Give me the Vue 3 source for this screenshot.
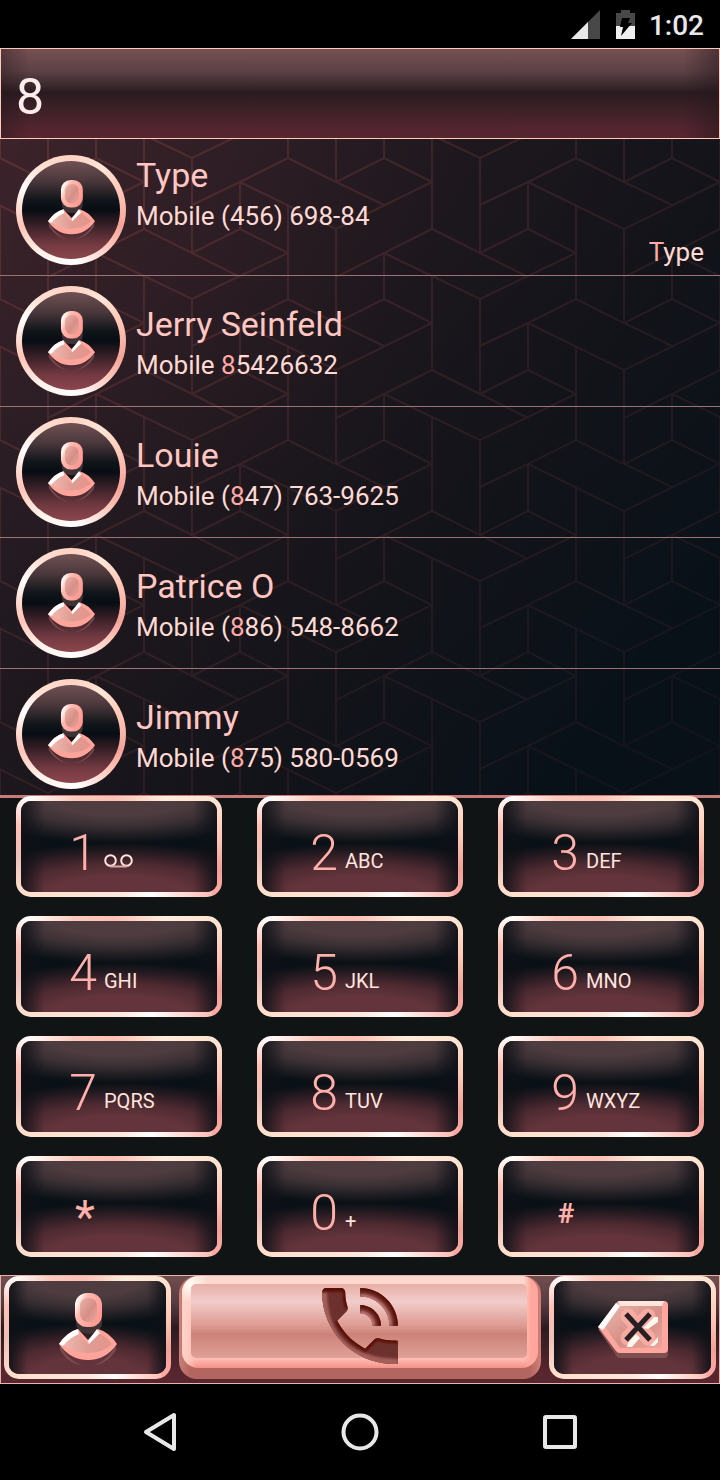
<script setup>
import { ref } from 'vue'

const query = ref('8')

const contacts = [
  { name: 'Type', label: 'Mobile', number: [['(456) 698-84', false]], extra: [['T', true], ['ype', false]] },
  { name: 'Jerry Seinfeld', label: 'Mobile', number: [['8', true], ['5426632', false]] },
  { name: 'Louie', label: 'Mobile', number: [['(', false], ['8', true], ['47) 763-9625', false]] },
  { name: 'Patrice O', label: 'Mobile', number: [['(', false], ['8', true], ['86) 548-8662', false]] },
  { name: 'Jimmy', label: 'Mobile', number: [['(', false], ['8', true], ['75) 580-0569', false]] },
]

const keys = [
  { digit: '1', letters: '', voicemail: true },
  { digit: '2', letters: 'ABC' },
  { digit: '3', letters: 'DEF' },
  { digit: '4', letters: 'GHI' },
  { digit: '5', letters: 'JKL' },
  { digit: '6', letters: 'MNO' },
  { digit: '7', letters: 'PQRS' },
  { digit: '8', letters: 'TUV' },
  { digit: '9', letters: 'WXYZ' },
  { digit: '*', letters: '', kind: 'star' },
  { digit: '0', letters: '+' },
  { digit: '#', letters: '', kind: 'hash' },
]

function press(digit) {
  query.value += digit
}

function erase() {
  query.value = query.value.slice(0, -1)
}
</script>

<template>
  <div class="screen">
    <svg class="defs" width="0" height="0" aria-hidden="true">
      <defs>
        <linearGradient id="edge" x1="0" y1="0" x2="1" y2="0.6">
          <stop offset="0" stop-color="#fff" />
          <stop offset="0.2" stop-color="#fff1ec" />
          <stop offset="0.38" stop-color="#ffb9b0" />
          <stop offset="1" stop-color="#ff9890" />
        </linearGradient>
        <linearGradient id="face" x1="0" y1="0" x2="1" y2="1">
          <stop offset="0" stop-color="#eab4ac" />
          <stop offset="0.55" stop-color="#d68f86" />
          <stop offset="1" stop-color="#eba59c" />
        </linearGradient>
        <linearGradient id="chest" x1="0" y1="0" x2="1" y2="0">
          <stop offset="0" stop-color="#f0b9b0" />
          <stop offset="0.5" stop-color="#df9d94" />
          <stop offset="1" stop-color="#e59389" />
        </linearGradient>
        <symbol id="person" viewBox="0 0 58 74">
          <path d="M17 22v8a13 11 0 0 0 26 0v-8z" fill="#453638" opacity=".9" />
          <path d="M1 52q12 21 28 21t28-21v5q-10 16-28 16T1 57z" fill="#8e5a5b" opacity=".65" />
          <path d="M0 51q8-12 19-15l10 11 10-11q11 3 19 15-11 16-29 16T0 51z" fill="#ffa49b" />
          <path d="M4 52q6-9 14-12l11 11 11-11q8 4 13 11-9 9-24 9T4 52z" fill="url(#chest)" />
          <path d="M29 48l9-12 3 4-11 11z" fill="#fff" />
          <path d="M0 51q8-12 19-15l1 5Q10 45 4 53z" fill="#fff" />
          <rect x="16" y="0" width="27" height="34" rx="12" fill="url(#edge)" />
          <rect x="21" y="5" width="17" height="24" rx="8" fill="url(#face)" />
        </symbol>
      </defs>
    </svg>

    <header class="status">
      <svg class="signal" width="29" height="29" viewBox="0 0 29 29" aria-label="Signal">
        <path d="M29 0v29H0z" fill="#484848" />
        <path d="M17 12v17H0z" fill="#e8e8e8" />
      </svg>
      <svg class="battery" width="19" height="29" viewBox="0 0 19 29" aria-label="Charging">
        <path d="M5 0h9v3h5v14H0V3h5z" fill="#484848" />
        <path d="M0 16h19v13H0z" fill="#f0f0f0" />
        <path d="M6 8h8l-2 5h4L5 26l2-9H4z" fill="#000" />
      </svg>
      <time>1:02</time>
    </header>

    <div class="field">
      <input v-model="query" type="text" aria-label="Number or name" />
    </div>

    <main class="results">
      <svg class="lattice" width="100%" height="100%" aria-hidden="true">
        <defs>
          <pattern id="cubes" width="288" height="141" patternUnits="userSpaceOnUse" patternTransform="translate(48 19)">
            <path
              d="M0 71V141M0 0V24M288 71V141M288 0V24M48 95V141M96 119V141M96 0V71M144 0V95M192 24V71M240 47V141M0 24L48 0L96 24L0 71M0 24L48 47M240 0L288 24M192 24L240 0M192 24L144 47M192 24L288 71M96 71L0 119M48 95L144 141M96 71L192 119M192 71L144 95M192 71L240 95L144 141M96 -22L144 0L192 -22"
              fill="none"
              stroke="#a04e48"
              stroke-width="2"
            />
          </pattern>
          <linearGradient id="fade" x1="0" y1="0" x2="1" y2="1">
            <stop offset="0" stop-color="#fff" stop-opacity=".32" />
            <stop offset="0.5" stop-color="#fff" stop-opacity=".17" />
            <stop offset="1" stop-color="#fff" stop-opacity=".06" />
          </linearGradient>
          <mask id="veil"><rect width="100%" height="100%" fill="url(#fade)" /></mask>
        </defs>
        <rect width="100%" height="100%" fill="url(#cubes)" mask="url(#veil)" />
      </svg>
      <ul>
        <li v-for="c in contacts" :key="c.name">
          <button type="button" class="contact" :class="{ tall: c.extra }">
            <span class="avatar">
              <svg width="47" height="60"><use href="#person" /></svg>
            </span>
            <span class="lines">
              <span class="name">{{ c.name }}</span>
              <span class="phone">{{ c.label }}&#32;<span v-for="(p, i) in c.number" :key="i" :class="{ hit: p[1] }">{{ p[0] }}</span></span>
              <span v-if="c.extra" class="extra"><span v-for="(p, i) in c.extra" :key="i" :class="{ hit: p[1] }">{{ p[0] }}</span></span>
            </span>
          </button>
        </li>
      </ul>
    </main>

    <section class="pad" aria-label="Keypad">
      <button v-for="k in keys" :key="k.digit" type="button" class="key glass" @click="press(k.digit)">
        <span class="digit" :class="k.kind">{{ k.digit }}</span>
        <span class="letters">
          <svg v-if="k.voicemail" class="tape" width="29" height="15" viewBox="0 0 29 15" aria-label="Voicemail">
            <g fill="none" stroke="#ffe4df" stroke-width="2">
              <circle cx="6.500" cy="6.500" r="5.300" />
              <circle cx="22.500" cy="6.500" r="5.300" />
              <path d="M6 12.500h17" stroke="#d9a9a7" />
            </g>
          </svg>
          <template v-else>{{ k.letters }}</template>
        </span>
      </button>
    </section>

    <section class="actions">
      <button type="button" class="side glass" aria-label="Contacts">
        <svg width="58" height="74"><use href="#person" /></svg>
      </button>
      <button type="button" class="call" aria-label="Call">
        <span class="call-top">
          <span class="call-face"></span>
        </span>
        <svg class="handset" width="76" height="76" viewBox="3 3 18 18">
          <defs>
            <path
              id="phone"
              d="M21 15.500c-2.250 0-3.450-.2-4.570-.57-.35-.11-.74-.03-1.020.24l-2.200 2.200c-2.830-1.440-5.150-3.750-6.590-6.590l2.200-2.210c.28-.26.36-.65.25-1C8.700 6.450 8.500 5.250 8.500 4c0-.55-.45-1-1-1H4c-.55 0-1 .45-1 1 0 9.390 7.610 17 17 17h1zM19 12h2c0-4.970-4.030-9-9-9v2c3.870 0 7 3.130 7 7zm-4 0h2c0-2.760-2.240-5-5-5v2c1.660 0 3 1.340 3 3z"
            />
            <clipPath id="phone-clip"><use href="#phone" /></clipPath>
            <filter id="soft" x="-10%" y="-10%" width="120%" height="120%"><feGaussianBlur stdDeviation=".2" /></filter>
          </defs>
          <g clip-path="url(#phone-clip)">
            <rect x="3" y="3" width="18" height="18" fill="#6c312d" />
            <path d="M3 4q.3 16.500 18 17" fill="none" stroke="#a35f5a" stroke-width="2.400" filter="url(#soft)" />
            <path d="M12 5c3.870 0 7 3.130 7 7M12 9c1.660 0 3 1.340 3 3" fill="none" stroke="#c0736d" stroke-width="1.200" filter="url(#soft)" />
            <path d="M19 12h2M15 12h2" stroke="#a8625c" stroke-width="1.200" filter="url(#soft)" />
            <path d="M3 3.200h5.500M6.620 10.780c1.440 2.840 3.760 5.150 6.590 6.590l2.200-2.200c.28-.27.67-.35 1.020-.24q2 .6 4.570.57M12 3c4.970 0 9 4.030 9 9M12 7c2.760 0 5 2.240 5 5M8.500 3.500q0 3 .7 4.200" fill="none" stroke="#5a0805" stroke-width="1.200" filter="url(#soft)" />
          </g>
        </svg>
      </button>
      <button type="button" class="side glass" aria-label="Delete" @click="erase">
        <svg width="70" height="58" viewBox="0 0 70 58">
          <path d="M0 28l18 26q1 3 4 3h44q4 0 4-4V30z" fill="#7d4f50" />
          <path d="M0 26L18 2q2-2 4-2h44q4 0 4 4v44q0 4-4 4H22q-3 0-4-2z" fill="#ffa69e" />
          <path d="M7 26L22 5h42v42H22z" fill="url(#face)" />
          <path d="M20 0h46l-2 5H22z" fill="#ffe6dc" />
          <path d="M0 26L18 2l4 3L5 29z" fill="#fff" />
          <path d="M30 15L50 37M50 15L30 37" stroke="#ffb0a8" stroke-width="15" stroke-linecap="round" opacity=".8" />
          <path d="M45 27l11-11h4v5L50 28zM30 42l8-9 4 4-8 9h-5zM52 45l8-9v5l-4 4z" fill="#fff8ef" />
          <path d="M28 13L52 39M52 13L28 39" stroke="#262024" stroke-width="5" />
        </svg>
      </button>
    </section>

    <nav class="system">
      <button type="button" aria-label="Back">
        <svg width="38" height="40" viewBox="0 0 38 40"><path d="M33 3v34L5 20z" fill="none" stroke="#e8e8e8" stroke-width="4" stroke-linejoin="round" /></svg>
      </button>
      <button type="button" aria-label="Home">
        <svg width="38" height="38" viewBox="0 0 38 38"><circle cx="19" cy="19" r="16.500" fill="none" stroke="#e8e8e8" stroke-width="4" /></svg>
      </button>
      <button type="button" aria-label="Recent apps">
        <svg width="34" height="34" viewBox="0 0 34 34"><rect x="2" y="2" width="30" height="30" rx="1" fill="none" stroke="#e8e8e8" stroke-width="4" /></svg>
      </button>
    </nav>
  </div>
</template>

<style>
body {
  background: #000;
}
</style>

<style scoped>
.screen {
  display: flex;
  flex-direction: column;
  min-height: 100vh;
  background: #111415;
  font-family: Roboto, 'Liberation Sans', sans-serif;
  overflow: hidden;
}

.screen * {
  box-sizing: border-box;
}

button,
input {
  margin: 0;
  padding: 0;
  border: 0;
  background: none;
  font: inherit;
  color: inherit;
}

svg {
  display: block;
}

.defs {
  position: absolute;
}

.status {
  display: flex;
  align-items: center;
  justify-content: flex-end;
  gap: 14px;
  height: 48px;
  padding-right: 16px;
  background: #000;
  color: #e8e8e8;
  font-size: 28px;
  font-weight: 500;
}

.status .signal {
  margin-right: 2px;
}

.status time {
  padding-top: 2px;
}

.field {
  height: 91px;
  border: 1px solid #ffc9ba;
  background:
    linear-gradient(90deg, rgba(35, 22, 27, 0.4), transparent 4%, transparent 95%, rgba(35, 22, 27, 0.5)),
    linear-gradient(#765053, #5c4145 25%, #432f34 37%, #2a1b20 49%, #3a2026 65%, #54252f 90%, #57262f);
}

.field input {
  width: 100%;
  height: 100%;
  padding: 6px 15px 0;
  outline: 0;
  color: #ffebe9;
  font-size: 50px;
}

.results {
  position: relative;
  background:
    radial-gradient(circle at 0 0, rgba(90, 42, 44, 0.3), transparent 460px),
    linear-gradient(128deg, #30202a 0%, #1e181e 38%, #14141a 58%, #081118 88%);
  border-bottom: 3px solid #c87b79;
}

.lattice {
  position: absolute;
  inset: 0;
}

ul {
  position: relative;
  margin: 0;
  padding: 0;
  list-style: none;
}

li {
  border-bottom: 1px solid #9d7274;
}

li:last-child {
  border-bottom: 0;
}

.contact {
  display: flex;
  align-items: flex-start;
  gap: 10px;
  width: 100%;
  height: 130px;
  padding: 10px 16px 0;
  text-align: left;
}

.contact.tall {
  height: 136px;
  padding-top: 16px;
}

li:last-child .contact {
  height: 126px;
}

.avatar {
  display: flex;
  justify-content: center;
  flex: none;
  width: 110px;
  height: 110px;
  padding-top: 19px;
  border: 6px solid transparent;
  border-radius: 50%;
  background:
    linear-gradient(#705153, #4b383c 20%, #10151a 40%, #070d13 50%, #2d1b22 62%, #733a42 85%, #8c454d) padding-box,
    conic-gradient(#ffd2c4, #ffe6d6 10%, #ffc4b4 20%, #f5a39a 30%, #ffc6ba 37%, #fff 48%, #fff2e9 60%, #ffc4b8 70%, #ffd9cf 75%, #fff 82%, #ffe0d2 90%, #ffd2c4) border-box;
}

.lines {
  display: flex;
  flex: 1;
  flex-direction: column;
  padding-top: 16px;
}

.tall .lines {
  padding-top: 0;
  margin-top: -2px;
}

.name {
  color: #ffc6c2;
  font-size: 34px;
  line-height: 44px;
}

.phone,
.extra {
  color: #ffdad4;
  font-size: 26px;
  line-height: 38px;
}

.extra {
  align-self: flex-end;
  line-height: 34px;
}

.hit {
  color: #ffaaa5;
}

.pad {
  position: relative;
  display: grid;
  grid-template-columns: repeat(3, 1fr);
  gap: 19px 35px;
  margin-top: -2px;
  padding: 0 16px 18px;
}

.glass {
  border: 5px solid transparent;
  border-radius: 15px;
  background:
    linear-gradient(90deg, rgba(14, 17, 23, 0.85), transparent 12%, transparent 88%, rgba(14, 17, 23, 0.85)) padding-box,
    radial-gradient(ellipse 90% 50% at 50% -4%, #4e3c40 40%, rgba(76, 59, 62, 0.75) 62%, rgba(76, 59, 62, 0.25) 86%, transparent) padding-box,
    radial-gradient(ellipse 90% 62% at 50% 108%, #63343b 42%, rgba(95, 49, 56, 0.8) 62%, rgba(95, 49, 56, 0.25) 86%, transparent) padding-box,
    linear-gradient(#0b1117, #0a1116 48%, #131119 75%) padding-box,
    linear-gradient(#fff, #ffc0b4 30%, #efc0b8 60%, #ffe2cf) left / 10px 100% no-repeat border-box,
    linear-gradient(#ffe8d4, #ffc9b6 40%, #f1a198 72%, #ffaaa3) right / 10px 100% no-repeat border-box,
    linear-gradient(90deg, #fff 5%, #ffc9bd 28%, #ffc0b4 48%, #ffecda 72%, #ffe2ce) top / 100% 50% no-repeat border-box,
    linear-gradient(90deg, #ffe0cc 10%, #ffe6dc 50%, #fff 66%, #ffe2dc 78%, #ffb0a8) bottom / 100% 50% no-repeat border-box;
}

.key {
  display: flex;
  height: 101px;
  padding: 20px 0 0 44px;
  align-items: flex-start;
  gap: 3px;
  text-align: left;
}

.digit {
  width: 36px;
  color: #ffb0ab;
  font-size: 50px;
  font-weight: 300;
  line-height: 64px;
  text-align: center;
}

.digit.star {
  padding-left: 4px;
  font-size: 46px;
  font-weight: 400;
  line-height: 72px;
}

.digit.hash {
  padding-left: 2px;
  font-size: 28px;
  font-weight: 700;
  line-height: 66px;
}

.letters {
  color: #ffe4df;
  font-size: 20px;
  line-height: 80px;
}

.tape {
  margin-top: 33px;
}

.actions {
  position: relative;
  display: flex;
  gap: 8px;
  height: 109px;
  padding: 0 3px;
  border: 1px solid #e8b5aa;
  background: linear-gradient(#724d50, #553c41 25%, #2a1b20 49%, #3d2027 65%, #57262f 90%);
}

.side {
  display: flex;
  align-items: center;
  justify-content: center;
  width: 167px;
  height: 103px;
  padding-top: 4px;
}

.call {
  position: relative;
  display: flex;
  flex: 1;
  height: 103px;
  padding: 0 3px 11px;
  border-radius: 18px;
  background: linear-gradient(90deg, #c98078, #b3665f 3%, #b3665f 97%, #d08078);
}

.call-top {
  flex: 1;
  padding: 8px 11px 10px 9px;
  border-radius: 16px;
  background:
    radial-gradient(circle at 8px 8px, #fffdf5, transparent 18px),
    linear-gradient(90deg, #ffd3c9, transparent 4%, transparent 96%, #ffa79e 98%),
    linear-gradient(#ffd8cd 12%, #ffc2b6 50%, #ffbdb3 90%, #f59088);
}

.call-face {
  display: block;
  height: 100%;
  border-radius: 5px;
  background: linear-gradient(#e8b0a8, #f1cccb 24%, #edc0bb 32%, #dd9b93 56%, #cd8279 68%, #d48e85 80%, #dfa198);
}

.handset {
  position: absolute;
  top: 12px;
  left: 50%;
  margin-left: -38px;
}

.system {
  display: grid;
  grid-template-columns: repeat(3, 200px);
  flex: 1;
  justify-content: center;
  min-height: 96px;
  background: #000;
}

.system button {
  display: flex;
  align-items: center;
  justify-content: center;
}
</style>
